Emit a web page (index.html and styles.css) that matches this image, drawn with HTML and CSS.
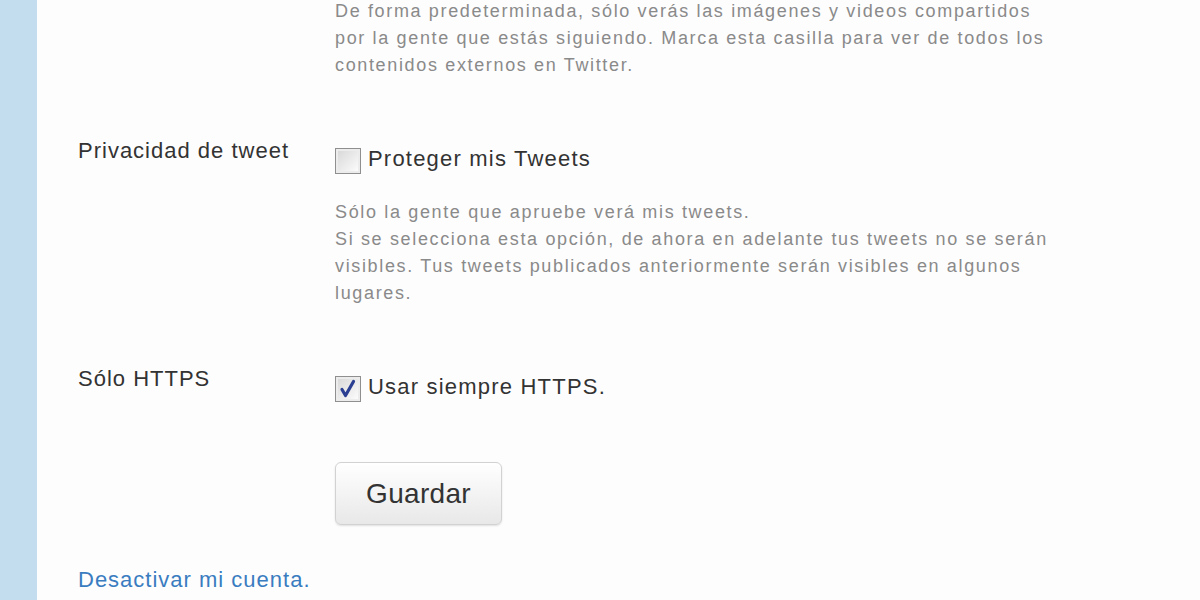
FILE: index.html
```html
<!DOCTYPE html>
<html lang="es">
<head>
<meta charset="utf-8">
<title>Configuración</title>
<link rel="stylesheet" href="styles.css">
</head>
<body>
<div class="page">
  <aside class="rail"></aside>
  <main class="main">
    <section class="row first">
      <div class="label"></div>
      <div class="control">
        <p class="desc">De forma predeterminada, sólo verás las imágenes y videos compartidos por la gente que estás siguiendo. Marca esta casilla para ver de todos los contenidos externos en Twitter.</p>
      </div>
    </section>
    <section class="row">
      <div class="label">Privacidad de tweet</div>
      <div class="control">
        <label class="check"><span class="box"></span><span class="check-text">Proteger mis Tweets</span></label>
        <p class="desc spaced">Sólo la gente que apruebe verá mis tweets.<br>Si se selecciona esta opción, de ahora en adelante tus tweets no se serán visibles. Tus tweets publicados anteriormente serán visibles en algunos lugares.</p>
      </div>
    </section>
    <section class="row last">
      <div class="label">Sólo HTTPS</div>
      <div class="control">
        <label class="check"><span class="box checked"><svg viewBox="0 0 26 26" width="26" height="26"><path d="M7 13.5 L10.5 19.5 L18.5 5.5" fill="none" stroke="#2b3f92" stroke-width="3.2" stroke-linecap="round" stroke-linejoin="round"/></svg></span><span class="check-text">Usar siempre HTTPS.</span></label>
        <button class="save" type="button">Guardar</button>
      </div>
    </section>
    <a class="deactivate" href="#">Desactivar mi cuenta.</a>
  </main>
</div>
</body>
</html>
```
FILE: styles.css
```css
html, body {
  margin: 0;
  padding: 0;
  background: #fdfdfd;
  font-family: "Liberation Sans", Arial, sans-serif;
}
.page {
  display: flex;
  height: 600px;
  overflow: hidden;
}
.rail {
  width: 37px;
  flex: none;
  background: #c3ddef;
}
.main {
  flex: 1;
  padding-left: 41px;
  margin-top: -2px;
}
.row {
  display: grid;
  grid-template-columns: 257px 1fr;
  margin-bottom: 57px;
}
.row.last {
  margin-bottom: 0;
}
.label {
  font-size: 22px;
  line-height: 30px;
  letter-spacing: 1px;
  color: #333;
}
.desc {
  margin: 0;
  width: 728px;
  font-size: 18px;
  line-height: 27px;
  letter-spacing: 1.65px;
  color: #8a8a8a;
}
.desc.spaced {
  margin-top: 25px;
}
.check {
  display: flex;
  align-items: center;
  gap: 7px;
  margin-top: 8px;
  height: 30px;
}
.box {
  width: 24px;
  height: 24px;
  flex: none;
  border: 1px solid #8f8f8f;
  background: linear-gradient(135deg, #d6d6d6 0%, #f2f2f2 70%, #ffffff 100%);
  box-shadow: inset 0 0 0 2px #ececec;
  position: relative;
  margin-top: 4px;
}
.box svg {
  position: absolute;
  left: -1px;
  top: -1px;
}
.check-text {
  font-size: 22px;
  line-height: 30px;
  letter-spacing: 1.2px;
  color: #333;
}
.save {
  display: block;
  margin-top: 60px;
  width: 167px;
  height: 63px;
  border: 1px solid #d2d2d2;
  border-radius: 6px;
  background: linear-gradient(#ffffff, #e8e8e8);
  box-shadow: 0 1px 2px rgba(0, 0, 0, 0.12);
  font-family: "Liberation Sans", Arial, sans-serif;
  font-size: 28px;
  letter-spacing: 0.3px;
  color: #333;
  padding: 0;
}
.deactivate {
  display: block;
  width: max-content;
  margin-top: 40px;
  font-size: 22px;
  line-height: 30px;
  letter-spacing: 1px;
  color: #3a7cc0;
  text-decoration: none;
}
```
